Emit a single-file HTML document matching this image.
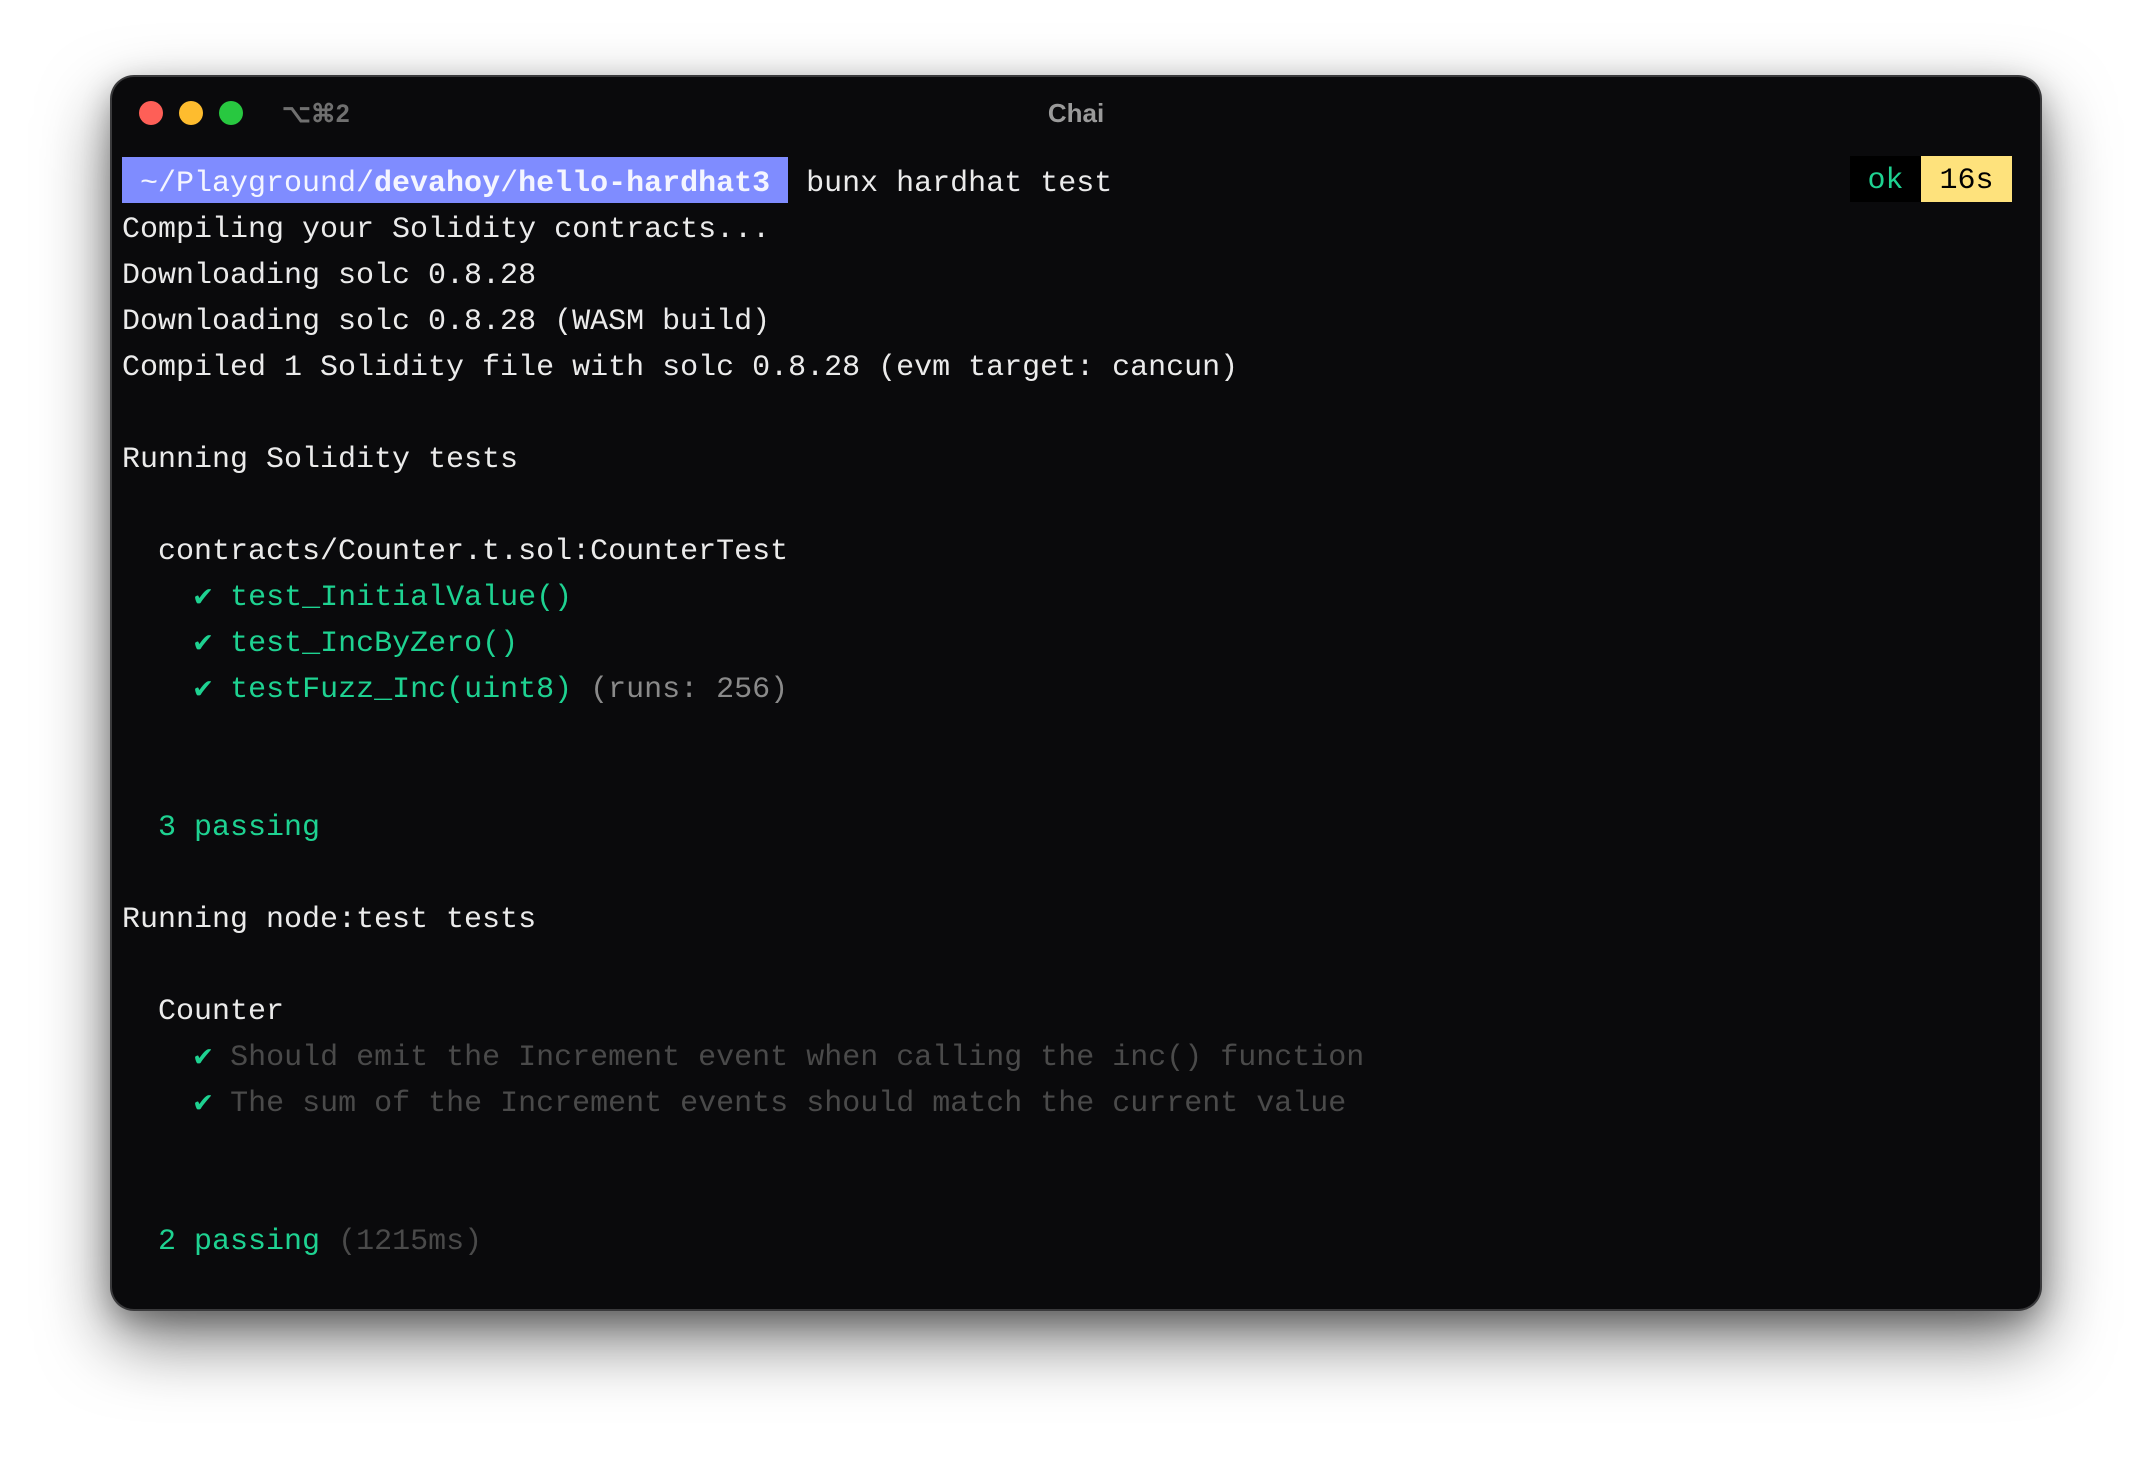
<!DOCTYPE html>
<html><head><meta charset="utf-8">
<style>
html,body{margin:0;padding:0;width:2152px;height:1458px;background:#fff;overflow:hidden}
.win{position:absolute;left:112px;top:77px;width:1928px;height:1232px;background:#0a0a0c;border-radius:22px;box-shadow:0 0 0 2px #3a3a3c,0 30px 70px rgba(0,0,0,.55),0 10px 30px rgba(0,0,0,.3);}
.dot{position:absolute;top:24px;width:24px;height:24px;border-radius:50%}
.t1{position:absolute;left:170px;top:22px;font:bold 25px "Liberation Sans",sans-serif;color:#707070}
.t2{position:absolute;left:0;width:100%;text-align:center;top:21px;font:bold 26px "Liberation Sans",sans-serif;color:#9a9a9a}
pre{position:absolute;left:10px;top:84px;margin:0;font:30px/46px "Liberation Mono",monospace;color:#ebebeb;letter-spacing:0}
.p{background:#7f8cff;color:#f4f5ff;display:inline-block;padding:0;position:relative;top:-4px;line-height:46px}
.p span.x{position:relative;top:4px}
.b{font-weight:bold}
.g{color:#1ed291}
.d{color:#4a4a4a}
.m{color:#8a8a8a}
.ok{position:absolute;top:79px;left:1738px;width:71px;height:46px;background:#000;color:#1ed291;font:30px/50px "Liberation Mono",monospace;text-align:center}
.s{position:absolute;top:79px;left:1809px;width:91px;height:46px;background:#fee27c;color:#000;font:30px/50px "Liberation Mono",monospace;text-align:center}
</style></head><body>
<div class="win">
<div class="dot" style="left:27px;background:#fe5f57"></div>
<div class="dot" style="left:67px;background:#febc2e"></div>
<div class="dot" style="left:107px;background:#28c840"></div>
<div class="t1">⌥⌘2</div>
<div class="t2">Chai</div>
<pre><span class="p"><span class="x"> ~/Playground/<span class="b">devahoy</span>/<span class="b">hello-hardhat3</span> </span></span> bunx hardhat test
Compiling your Solidity contracts...
Downloading solc 0.8.28
Downloading solc 0.8.28 (WASM build)
Compiled 1 Solidity file with solc 0.8.28 (evm target: cancun)

Running Solidity tests

  contracts/Counter.t.sol:CounterTest
    <span class="g">✔ test_InitialValue()</span>
    <span class="g">✔ test_IncByZero()</span>
    <span class="g">✔ testFuzz_Inc(uint8)</span> <span class="m">(runs: 256)</span>


  <span class="g">3 passing</span>

Running node:test tests

  Counter
    <span class="g">✔</span> <span class="d">Should emit the Increment event when calling the inc() function</span>
    <span class="g">✔</span> <span class="d">The sum of the Increment events should match the current value</span>


  <span class="g">2 passing</span> <span class="d">(1215ms)</span></pre>
<div class="ok">ok</div>
<div class="s">16s</div>
</div>
</body></html>
